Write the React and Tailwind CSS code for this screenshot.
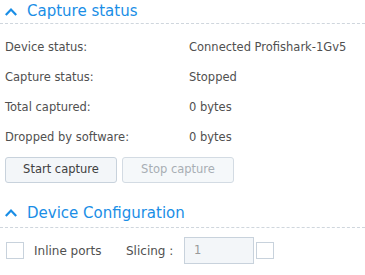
export default function App() {
  const font = { fontFamily: '"DejaVu Sans", Verdana, sans-serif' };
  const Chevron = () => (
    <svg width="12" height="8" viewBox="0 0 12 8" className="shrink-0">
      <path d="M0.8 7 L6 1.6 L11.2 7" fill="none" stroke="#1a8ee6" strokeWidth="2.2" />
    </svg>
  );
  const rows = [
    ["Device status:", "Connected Profishark-1Gv5"],
    ["Capture status:", "Stopped"],
    ["Total captured:", "0 bytes"],
    ["Dropped by software:", "0 bytes"],
  ];
  return (
    <div className="w-[365px] h-[275px] bg-white overflow-hidden text-[#505050]" style={font}>
      <div className="flex items-center gap-[10px] pl-[5px] h-[24px] border-b border-dashed border-[#cfd6dd]">
        <Chevron />
        <span className="text-[15px] text-[#1a8ee6] leading-none">Capture status</span>
      </div>
      <div className="pt-[15px]">
        {rows.map(([k, v]) => (
          <div key={k} className="flex h-[30px] items-start text-[11.5px] leading-[16px]">
            <span className="w-[189px] pl-[5px]">{k}</span>
            <span>{v}</span>
          </div>
        ))}
      </div>
      <div className="flex gap-[5px] pl-[5px] -mt-[2px]">
        <button className="w-[112px] h-[26px] rounded-[3px] border border-[#c8d2dc] bg-[#f3f6f9] text-[11.5px] text-[#404040]">Start capture</button>
        <button className="w-[112px] h-[26px] rounded-[3px] border border-[#d3dbe3] bg-[#f5f8fa] text-[11.5px] text-[#a8aeb4]">Stop capture</button>
      </div>
      <div className="flex items-center gap-[10px] pl-[5px] h-[26px] pb-[3px] mt-[19px] border-b border-dashed border-[#cfd6dd]">
        <Chevron />
        <span className="text-[15px] text-[#1a8ee6] leading-none">Device Configuration</span>
      </div>
      <div className="flex items-center h-[27px] mt-[9px] pl-[6px] text-[12px]">
        <div className="w-[18px] h-[17px] border border-[#c8d2dc] bg-white shrink-0" />
        <span className="w-[102px] pl-[10px] shrink-0">Inline ports</span>
        <span className="w-[58px] shrink-0">Slicing :</span>
        <div className="w-[70px] h-[27px] border border-[#c8d2dc] bg-[#f3f6f9] flex items-center pl-[9px] text-[#999] text-[11.5px] shrink-0">1</div>
        <div className="ml-[2px] w-[18px] h-[17px] border border-[#c8d2dc] bg-white shrink-0" />
      </div>
    </div>
  );
}
